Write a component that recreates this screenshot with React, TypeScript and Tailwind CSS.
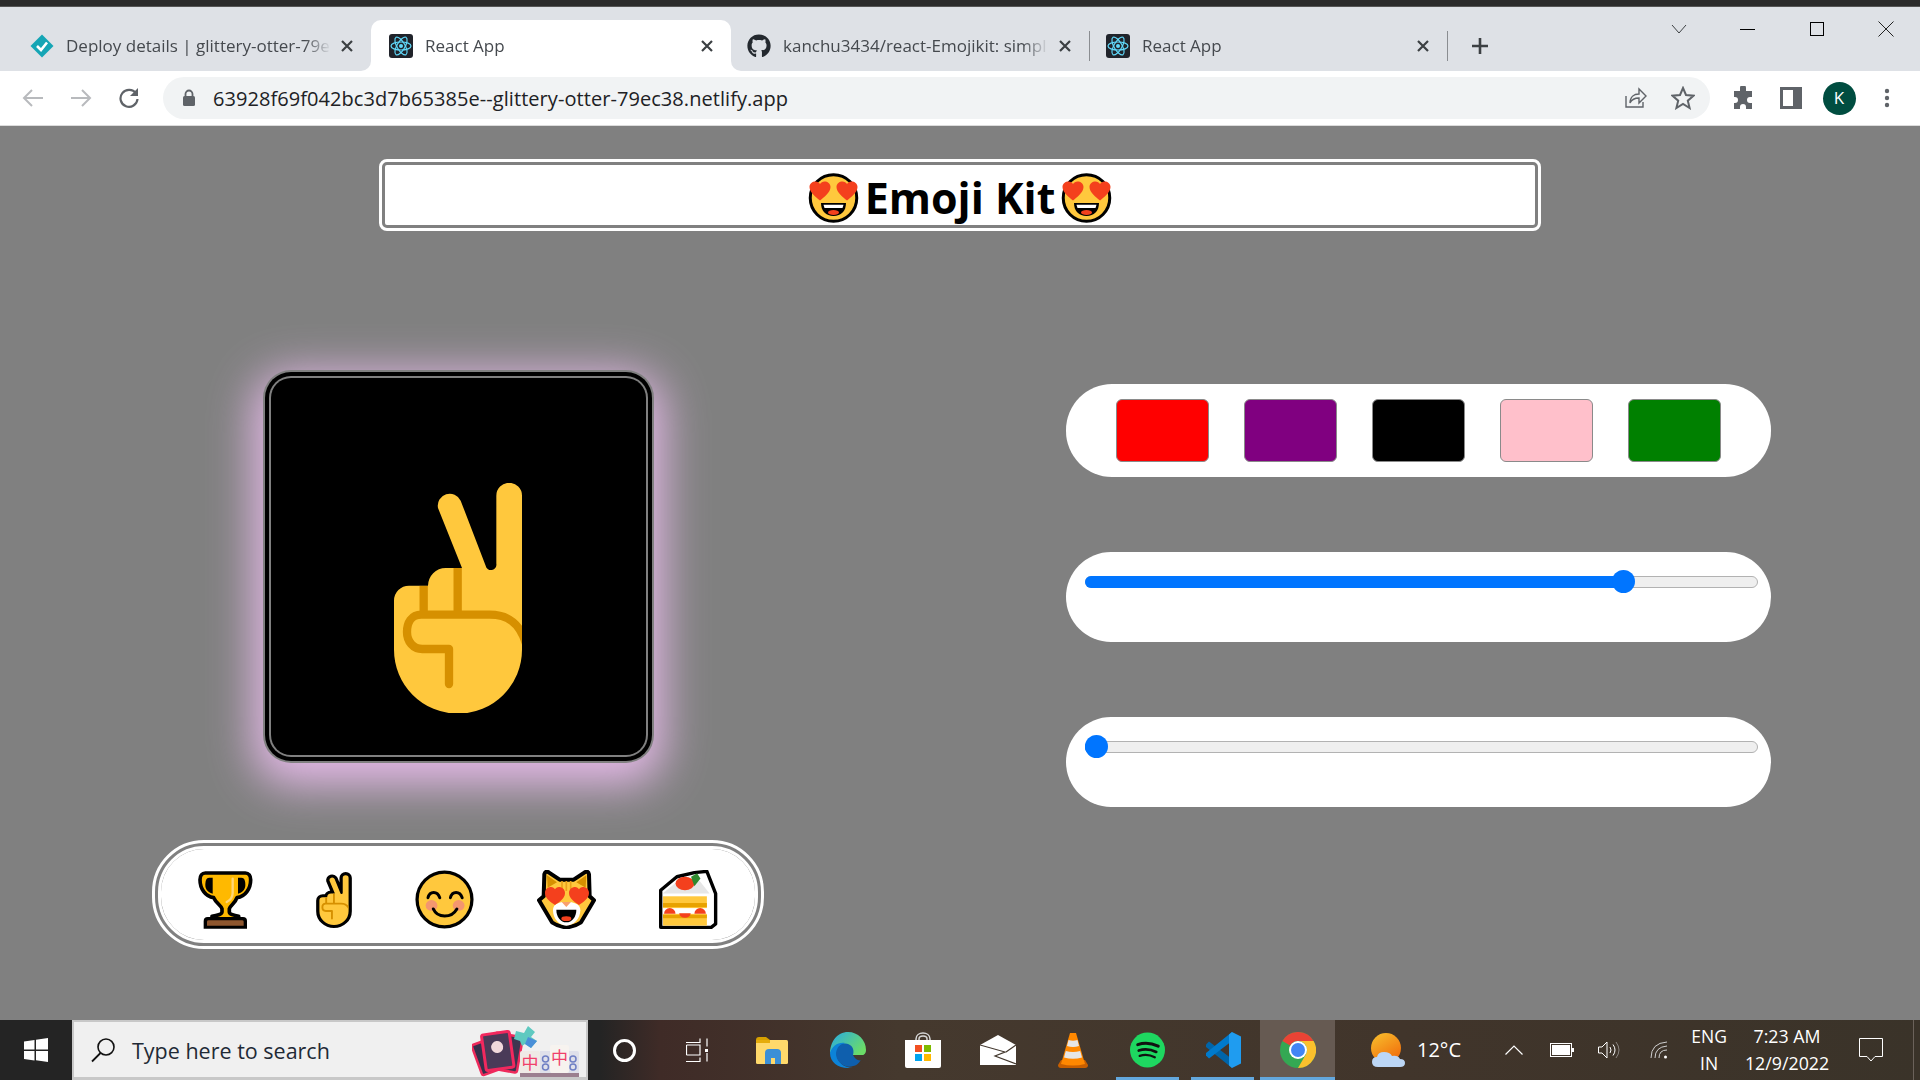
import React from "react";
import { FaGithub } from "react-icons/fa";

const SANS = "font-['Open_Sans',sans-serif]";

function NetlifyIcon() {
  return (
    <svg width="24" height="24" viewBox="0 0 24 24">
      <path d="M12 .5 23.5 12 12 23.5.5 12z" fill="#15a5b5" />
      <path d="m7 12 4 4 6-7.5" fill="none" stroke="#fff" strokeWidth="2.6" />
    </svg>
  );
}

function ReactIcon() {
  return (
    <svg width="24" height="24" viewBox="0 0 24 24">
      <rect width="24" height="24" rx="3" fill="#20232a" />
      <g fill="none" stroke="#61dafb" strokeWidth="1.2">
        <ellipse cx="12" cy="12" rx="10" ry="4" />
        <ellipse cx="12" cy="12" rx="10" ry="4" transform="rotate(60 12 12)" />
        <ellipse cx="12" cy="12" rx="10" ry="4" transform="rotate(120 12 12)" />
      </g>
      <circle cx="12" cy="12" r="2" fill="#61dafb" />
    </svg>
  );
}

function CloseGlyph() {
  return (
    <svg width="14" height="14" viewBox="0 0 14 14">
      <path d="M2 2l10 10M12 2 2 12" stroke="#3c4043" strokeWidth="2.2" />
    </svg>
  );
}

function Tab({
  icon,
  title,
  width,
  pad,
  active,
}: {
  icon: React.ReactNode;
  title: string;
  width: string;
  pad: string;
  active?: boolean;
}) {
  return (
    <div className={`relative flex h-[51px] items-center ${width} ${pad} pr-[16px] rounded-t-[10px] ${active ? "bg-white" : ""}`}>
      {active && (
        <>
          <span className="absolute bottom-0 left-[-10px] h-[10px] w-[10px] bg-white">
            <span className="block h-full w-full rounded-br-[10px] bg-[#dee1e6]" />
          </span>
          <span className="absolute bottom-0 right-[-10px] h-[10px] w-[10px] bg-white">
            <span className="block h-full w-full rounded-bl-[10px] bg-[#dee1e6]" />
          </span>
        </>
      )}
      <span className="flex w-[24px] shrink-0 justify-center">{icon}</span>
      <span
        className={`ml-[12px] min-w-0 flex-1 whitespace-nowrap text-[17px] text-[#45494e] [mask-image:linear-gradient(to_right,black_90%,transparent)] ${SANS}`}
      >
        {title}
      </span>
      <span className="ml-[8px] flex w-[16px] shrink-0 justify-center">
        <CloseGlyph />
      </span>
    </div>
  );
}

function TabStrip() {
  return (
    <div className="flex h-[64px] items-end bg-[#dee1e6] pl-[12px]">
      <Tab icon={<NetlifyIcon />} title="Deploy details | glittery-otter-79e" width="w-[359px]" pad="pl-[18px]" />
      <Tab icon={<ReactIcon />} title="React App" width="w-[360px]" pad="pl-[18px]" active />
      <Tab icon={<FaGithub size={24} color="#24292f" />} title="kanchu3434/react-Emojikit: simpl" width="w-[358px]" pad="pl-[16px]" />
      <div className="mb-[10px] h-[30px] w-px bg-[#8a8d91]" />
      <Tab icon={<ReactIcon />} title="React App" width="w-[357px]" pad="pl-[16px]" />
      <div className="mb-[10px] h-[30px] w-px bg-[#8a8d91]" />
      <svg className="mb-[14px] ml-[21px]" width="22" height="22" viewBox="0 0 22 22">
        <path d="M11 3v16M3 11h16" stroke="#3c4043" strokeWidth="2.6" />
      </svg>
      <div className="ml-auto flex self-start">
        <div className="flex h-[44px] w-[69px] items-center justify-center">
          <svg width="16" height="10" viewBox="0 0 16 10">
            <path d="M1 1l7 8 7-8" fill="none" stroke="#3c4043" strokeWidth="1" />
          </svg>
        </div>
        <div className="flex h-[44px] w-[69px] items-center justify-center">
          <div className="h-px w-[15px] bg-black" />
        </div>
        <div className="flex h-[44px] w-[69px] items-center justify-center">
          <div className="h-[14px] w-[14px] border border-black" />
        </div>
        <div className="flex h-[44px] w-[69px] items-center justify-center">
          <svg width="16" height="16" viewBox="0 0 16 16">
            <path d="M.5.5l15 15M15.5.5l-15 15" stroke="#222" strokeWidth="1" />
          </svg>
        </div>
      </div>
    </div>
  );
}

function ToolSlot({ children }: { children: React.ReactNode }) {
  return <div className="flex w-[48px] items-center justify-center">{children}</div>;
}

function Toolbar() {
  return (
    <div className="flex h-[55px] border-b border-[#dcdcdc] bg-white pl-[9px] pt-[6px]">
      <div className="flex h-[42px]">
        <ToolSlot>
          <svg width="22" height="20" viewBox="0 0 22 20">
            <path d="M21 10H2M10 2l-8 8 8 8" fill="none" stroke="#b8babd" strokeWidth="2" />
          </svg>
        </ToolSlot>
        <ToolSlot>
          <svg width="22" height="20" viewBox="0 0 22 20">
            <path d="M1 10h19M12 2l8 8-8 8" fill="none" stroke="#b8babd" strokeWidth="2" />
          </svg>
        </ToolSlot>
        <ToolSlot>
          <svg width="22" height="22" viewBox="0 0 22 22">
            <path d="M18 6.5A8.5 8.5 0 1 0 19.5 12" fill="none" stroke="#5f6368" strokeWidth="2.2" />
            <path d="M20 1v8h-8z" fill="#5f6368" />
          </svg>
        </ToolSlot>
      </div>
      <div className="ml-[10px] flex h-[42px] w-[1547px] items-center rounded-full bg-[#f1f3f4] pl-[19px] pr-[15px]">
        <svg width="14" height="18" viewBox="0 0 14 18">
          <path d="M3.5 7V5a3.5 3.5 0 0 1 7 0v2" fill="none" stroke="#5f6368" strokeWidth="1.8" />
          <rect x="1" y="7" width="12" height="10" rx="1.5" fill="#5f6368" />
        </svg>
        <span className={`ml-[17px] mt-[1px] flex-1 text-[20px] tracking-[0.06px] text-[#202124] ${SANS}`}>
          63928f69f042bc3d7b65385e--glittery-otter-79ec38.netlify.app
        </span>
        <svg width="24" height="24" viewBox="0 0 24 24">
          <path d="M3 10v11h17v-5" fill="none" stroke="#5f6368" strokeWidth="1.4" />
          <path d="M7 17c0-6 4-9 9-9V3l7 7-7 7v-5c-4 0-7 1-9 5z" fill="none" stroke="#5f6368" strokeWidth="1.4" />
        </svg>
        <svg className="ml-[24px]" width="24" height="24" viewBox="0 0 24 24">
          <path d="m12 2 3 7 7.5.7-5.7 5 1.8 7.3-6.6-4-6.6 4 1.8-7.3-5.7-5L9 9z" fill="none" stroke="#5f6368" strokeWidth="2" />
        </svg>
      </div>
      <div className="ml-[9px] flex h-[42px]">
        <ToolSlot>
          <svg width="24" height="24" viewBox="0 0 24 24">
            <path d="M9 2a3 3 0 0 1 6 0v3h6v6h-2a3 3 0 0 0 0 6h2v6h-6v-2a3 3 0 0 0-6 0v2H3v-6h1a3 3 0 0 0 0-6H3V5h6z" fill="#5f6368" />
          </svg>
        </ToolSlot>
        <ToolSlot>
          <svg width="22" height="22" viewBox="0 0 22 22">
            <rect x="1.5" y="1.5" width="19" height="19" fill="none" stroke="#5f6368" strokeWidth="3" />
            <rect x="13" y="2" width="7" height="18" fill="#5f6368" />
          </svg>
        </ToolSlot>
        <ToolSlot>
          <div className={`flex h-[33px] w-[33px] items-center justify-center rounded-full bg-[#004d40] text-[17px] text-white ${SANS}`}>K</div>
        </ToolSlot>
        <ToolSlot>
          <svg width="6" height="20" viewBox="0 0 6 20">
            <circle cx="3" cy="3" r="2.2" fill="#5f6368" />
            <circle cx="3" cy="10" r="2.2" fill="#5f6368" />
            <circle cx="3" cy="17" r="2.2" fill="#5f6368" />
          </svg>
        </ToolSlot>
      </div>
    </div>
  );
}

const HAND =
  "M770 433a38 38 0 0 1 77 0V895a192 192 0 0 1-384 0V748a45 45 0 0 1 45-45h57a53 53 0 0 1 53-53h49L595 470a36 36 0 0 1 68-22l75 195a16 16 0 0 0 32-6z";

function Hand({ outlined, id, className }: { outlined?: boolean; id: string; className: string }) {
  return (
    <svg className={className} viewBox={outlined ? "418 350 474 780" : "463 395 384 690"} preserveAspectRatio="none">
      <defs>
        <clipPath id={id}>
          <path d={HAND} />
        </clipPath>
      </defs>
      {outlined && <path d={HAND} fill="#000" stroke="#000" strokeWidth="86" strokeLinejoin="round" />}
      <path d={HAND} fill="#ffc83d" />
      <g clipPath={`url(#${id})`} fill="none" stroke="#d69000" strokeWidth="25" strokeLinecap="round" strokeLinejoin="round">
        <path d="M552 703V790M654 650V790" strokeLinecap="butt" />
        <path d="M860 880C840 810 800 790 750 790H545C515 790 502 815 502 842 502 870 520 893 548 893H628V998" />
      </g>
    </svg>
  );
}

function LoveFace() {
  const heart = "M23 55C15 48 2 39 2 28 2 21 8 17 14 17c4 0 7 2 9 5 2-3 5-5 9-5 6 0 12 4 12 11 0 11-13 20-21 27z";
  return (
    <svg className="h-[50px] w-[51px] shrink-0" viewBox="0 0 100 100">
      <circle cx="50" cy="50" r="46.5" fill="#ffc83d" stroke="#000" strokeWidth="6" />
      <path d={heart} fill="#f4401d" />
      <path d={heart} fill="#f4401d" transform="translate(54 0)" />
      <path d="M25 60H75C75 76 65 86 50 86S25 76 25 60z" fill="#000" />
      <path d="M30 63.5H70L68 70H32z" fill="#fff" />
      <ellipse cx="50" cy="79" rx="11" ry="5" fill="#f4401d" />
    </svg>
  );
}

function Trophy() {
  return (
    <svg className="h-[59px] w-[55px]" viewBox="28 30 165 175">
      <path
        d="M50 38H170C180 38 186 46 186 58 186 85 170 108 145 112 140 128 125 135 122 145V155C122 162 135 165 150 168V178H70V168C85 165 100 162 100 155V145C97 135 82 128 75 112 50 108 34 85 34 58 34 46 40 38 50 38z"
        fill="#ffb900"
        stroke="#000"
        strokeWidth="11"
        strokeLinejoin="round"
      />
      <path d="M62 52C50 52 50 68 50 75 50 90 62 98 72 100 72 85 72 65 72 52z" fill="#000" />
      <path d="M158 52C170 52 170 68 170 75 170 90 158 98 148 100 148 85 148 65 148 52z" fill="#000" />
      <path d="M132 55V98C132 112 124 120 114 125" fill="none" stroke="#ffd679" strokeWidth="7" strokeLinecap="round" />
      <path d="M45 205V182Q45 170 57 170H163Q175 170 175 182V205z" fill="#000" />
      <path d="M55 196V184Q55 180 60 180H160Q165 180 165 184V196z" fill="#8e562e" />
    </svg>
  );
}

function Smile() {
  return (
    <svg className="h-[59px] w-[59px]" viewBox="0 0 100 100">
      <circle cx="50" cy="50" r="46.5" fill="#ffc83d" stroke="#000" strokeWidth="5.5" />
      <ellipse cx="28" cy="60" rx="10" ry="9" fill="#f4966f" />
      <ellipse cx="74" cy="60" rx="10" ry="9" fill="#f4966f" />
      <g fill="none" stroke="#000" strokeWidth="5" strokeLinecap="round">
        <path d="M22 47C25 35 38 35 42 47" />
        <path d="M60 47C63 35 76 35 80 47" />
        <path d="M31 66C38 82 62 82 71 66" />
      </g>
    </svg>
  );
}

function Cat() {
  const heart = "M32 62C22 55 2 44 2 26 2 14 12 8 20 8c6 0 10 3 12 7 2-4 6-7 12-7 8 0 18 6 18 18 0 18-20 29-30 36z";
  return (
    <svg className="h-[59px] w-[59px]" viewBox="20 30 177 175">
      <path
        d="M42 42Q45 30 55 36L88 58H130L163 36Q174 30 176 42L178 108 191 120 152 186Q108 215 65 186L26 120 40 108z"
        fill="#ffc83d"
        stroke="#000"
        strokeWidth="12"
        strokeLinejoin="round"
      />
      <path d="M50 45 80 66 52 82zM168 45 138 66 166 82z" fill="#d69000" />
      <path d="M95 62V88M108 62V92M121 62V88" stroke="#e9a21c" strokeWidth="5" />
      <path d="M68 150C68 130 85 125 108 125S150 130 150 150C150 175 130 196 108 196S68 175 68 150z" fill="#fff" />
      <g transform="translate(42 72)"><path d={heart} fill="#f4401d" /></g>
      <g transform="translate(114 72)"><path d={heart} fill="#f4401d" /></g>
      <path d="M94 125H122L108 140z" fill="#f9a06e" />
      <path d="M78 148H138C138 170 125 186 108 186S78 170 78 148z" fill="#000" />
      <ellipse cx="108" cy="175" rx="15" ry="7" fill="#f4401d" />
    </svg>
  );
}

function Cake() {
  return (
    <svg className="h-[59px] w-[59px]" viewBox="385 30 175 175">
      <path d="M390 90 438 50 490 38 527 34 553 100V190L540 200H390z" fill="#fff" stroke="#000" strokeWidth="10" strokeLinejoin="round" />
      <path d="M396 100 442 62H505L535 100z" fill="#e6e6e6" />
      <rect x="397" y="108" width="130" height="35" fill="#ffc83d" />
      <rect x="397" y="128" width="130" height="12" fill="#e8a200" />
      <rect x="397" y="160" width="130" height="35" fill="#ffc83d" />
      <rect x="397" y="163" width="130" height="10" fill="#e8a200" />
      <path d="M400 160a17 17 0 0 1 34 0zM445 158a17 14 0 0 0 34 0zM490 160a17 17 0 0 1 34 0z" fill="#f4401d" />
      <ellipse cx="462" cy="70" rx="28" ry="20" fill="#f4401d" />
      <path d="M480 50 498 40 508 55 490 78z" fill="#2f8a2f" />
    </svg>
  );
}

function Swatch({ color }: { color: string }) {
  return <div className={`h-[63px] w-[93px] rounded-[6px] border border-[#8a8a8a] ${color}`} />;
}

function Slider({ fill, thumb }: { fill: string; thumb: string }) {
  return (
    <div className="h-[90px] w-[705px] rounded-[46px] bg-white pl-[19px] pr-[13px] pt-[24px]">
      <div className="relative h-[12px] rounded-full border border-[#b2b2b2] bg-[#efefef]">
        <div className={`absolute -inset-y-px -left-px rounded-full bg-[#0075ff] ${fill}`} />
        <div className={`absolute top-[-7px] h-[23px] w-[23px] rounded-full bg-[#0075ff] ${thumb}`} />
      </div>
    </div>
  );
}

function Page() {
  return (
    <div className="flex min-h-0 flex-1 flex-col bg-[#808080] pl-[152px] pt-[33px]">
      <div className="ml-[227px] flex h-[72px] w-[1162px] items-center justify-center rounded-[8px] border-[9px] border-double border-white bg-white bg-clip-padding pt-[5px]">
        <div className="flex items-center">
          <LoveFace />
          <h1 className={`mx-[6px] text-[43px] font-bold leading-[50px] text-black ${SANS}`}>Emoji Kit</h1>
          <LoveFace />
        </div>
      </div>
      <div className="mt-[139px] flex items-start">
        <div className="flex w-[612px] flex-col items-center">
          <div className="flex h-[392px] w-[390px] items-center justify-center">
            <div className="flex h-[377px] w-[375px] shrink-0 justify-center rounded-[20px] bg-black pt-[105px] shadow-[0_0_0_2px_#808080,0_0_0_6px_#000,0_0_0_8px_#808080,0_12px_44px_18px_#e3b8e6]">
              <Hand id="hand-big" className="h-[230px] w-[128px]" />
            </div>
          </div>
          <div className="mt-[78px] flex h-[109px] w-[612px] items-center justify-center gap-[63px] rounded-[52px] border-[9px] border-double border-white bg-white bg-clip-padding pt-[10px]">
            <Trophy />
            <Hand id="hand-small" outlined className="h-[56px] w-[36px]" />
            <Smile />
            <Cat />
            <Cake />
          </div>
        </div>
        <div className="ml-[302px] mt-[14px] flex w-[705px] flex-col gap-[75px]">
          <div className="flex h-[93px] w-[705px] items-center gap-[35px] rounded-[46px] bg-white pl-[50px]">
            <Swatch color="bg-[#ff0000]" />
            <Swatch color="bg-[#800080]" />
            <Swatch color="bg-[#000000]" />
            <Swatch color="bg-[#ffc0cb]" />
            <Swatch color="bg-[#008000]" />
          </div>
          <Slider fill="w-[538px]" thumb="left-[526px]" />
          <Slider fill="w-[10px]" thumb="left-[-1px]" />
        </div>
      </div>
    </div>
  );
}

function SearchArt() {
  return (
    <svg width="108" height="54" viewBox="0 0 108 54">
      <g transform="rotate(-20 20 32)">
        <rect x="4" y="16" width="28" height="32" rx="2" fill="#35304c" stroke="#ee2a5b" strokeWidth="2.5" />
      </g>
      <g transform="rotate(10 36 30)">
        <rect x="20" y="12" width="28" height="36" rx="2" fill="#3d3550" stroke="#ee2a5b" strokeWidth="2.5" />
      </g>
      <g transform="rotate(-8 26 30)">
        <rect x="12" y="10" width="28" height="36" rx="2" fill="#4a3a58" stroke="#f2285e" strokeWidth="3" />
        <circle cx="26" cy="24" r="6" fill="#f2d9dc" />
      </g>
      <path d="M44 8 52 10 56 3 63 9 59 14 65 18 59 25 53 21 50 23 48 18 42 16z" fill="#5fc9c0" />
      <path d="M56 14 65 18 59 25 53 21z" fill="#4a8fd8" />
      <rect x="48" y="28" width="20" height="26" rx="2" fill="#efeae6" />
      <rect x="68" y="28" width="11" height="26" fill="#dfe0ea" />
      <rect x="95" y="28" width="12" height="26" rx="2" fill="#dfe0ea" />
      <rect x="78" y="22" width="19" height="28" rx="2" fill="#f7f3ef" />
      <rect x="48" y="50" width="59" height="4" fill="#9b7f8f" />
      <circle cx="73.500" cy="36" r="3" fill="none" stroke="#6f7fc4" strokeWidth="1.500" />
      <circle cx="73.500" cy="44" r="3" fill="none" stroke="#6f7fc4" strokeWidth="1.500" />
      <circle cx="101" cy="36" r="3" fill="none" stroke="#6f7fc4" strokeWidth="1.500" />
      <circle cx="101" cy="44" r="3" fill="none" stroke="#6f7fc4" strokeWidth="1.500" />
      <text x="58" y="46" textAnchor="middle" fontSize="17" fill="#f0406a" fontFamily="'Noto Sans CJK SC', sans-serif">中</text>
      <text x="87.500" y="41" textAnchor="middle" fontSize="17" fill="#f0406a" fontFamily="'Noto Sans CJK SC', sans-serif">中</text>
    </svg>
  );
}

function Slot({ width, active, under, children }: { width: string; active?: boolean; under?: boolean; children: React.ReactNode }) {
  return (
    <div className={`relative flex h-full shrink-0 items-center justify-center ${width} ${active ? "bg-[#665a52]" : ""}`}>
      {children}
      {under && <div className="absolute inset-x-[6px] bottom-0 h-[3px] bg-[#63a8de]" />}
      {active && <div className="absolute inset-x-0 bottom-0 h-[3px] bg-[#63a8de]" />}
    </div>
  );
}

function Edge() {
  return (
    <svg width="36" height="36" viewBox="0 0 36 36">
      <defs>
        <linearGradient id="edge-top" x1="0" y1="0" x2="1" y2="0.6">
          <stop offset="0" stopColor="#27a9e6" />
          <stop offset="1" stopColor="#6bdc68" />
        </linearGradient>
      </defs>
      <path d="M18 0C28 0 36 8 36 18c0 4-3 6-7 6h-7c2-6-1-12-7-12C8 12 2 16 0 22 0 10 7 0 18 0z" fill="url(#edge-top)" />
      <path d="M0 21C2 14 8 10 15 11c-6 3-9 8-8 13 1 7 8 12 16 12h-5C8 36 0 30 0 21z" fill="#0c83d8" />
      <path d="M15 11.5c6 0 10 5 8 11.500h10c-1 4-3 7-6 9.500-5 3-12 3-16-1-5-4-6-10-4-14 1-3 4-6 8-6z" fill="#0f5fad" />
      <path d="M23 23h13c-.5 2-2 4-3.500 5.500-3 .5-7-.5-9.500-5.500z" fill="#43382e" />
    </svg>
  );
}

function Chrome() {
  return (
    <svg width="36" height="36" viewBox="0 0 36 36">
      <circle cx="18" cy="18" r="18" fill="#34a853" />
      <path d="M33.600 9A18 18 0 0 1 18 36L25.800 22.500A9 9 0 0 0 18 9z" fill="#fbc02d" />
      <path d="M2.400 9A18 18 0 0 1 33.600 9H18A9 9 0 0 0 10.200 13.500z" fill="#ea4335" />
      <circle cx="18" cy="18" r="9" fill="#fff" />
      <circle cx="18" cy="18" r="7" fill="#4285f4" />
    </svg>
  );
}

function Taskbar() {
  const text = `text-white ${SANS}`;
  return (
    <div className="flex h-[60px] shrink-0 bg-[linear-gradient(to_right,#242424_0,#242424_600px,#3f2b27_660px,#45392e_900px,#41352b_1400px,#3a3329_1920px)]">
      <div className="flex h-full w-[72px] items-center justify-center">
        <svg width="24" height="24" viewBox="0 0 24 24">
          <path d="M0 3.500 10.500 2v9.500H0zM12 1.800 24 0v11.500H12zM0 13h10.500v9.500L0 21zM12 13h12v11l-12-1.700z" fill="#fff" />
        </svg>
      </div>
      <div className="flex h-full w-[516px] items-center border-2 border-b-[3px] border-[#c8c8c8] bg-[#f0f0f0] pl-[16px]">
        <svg width="26" height="26" viewBox="0 0 26 26">
          <circle cx="16" cy="10" r="8" fill="none" stroke="#111" strokeWidth="1.6" />
          <path d="M10.500 16 2 24.500" stroke="#111" strokeWidth="1.800" />
        </svg>
        <span className={`ml-[16px] mt-[3px] text-[21.5px] text-[#1f2a36] ${SANS}`}>Type here to search</span>
        <div className="ml-auto flex items-center pr-[6px]">
          <SearchArt />
        </div>
      </div>
      <Slot width="w-[72px]">
        <div className="h-[23px] w-[23px] rounded-full border-[3px] border-white" />
      </Slot>
      <Slot width="w-[74px]">
        <svg width="22" height="24" viewBox="0 0 22 24">
          <path d="M0 4.500h14V.5M0 .5v0M0 23.500h14v-4M0 23.500M.5 7v10M.5 7H14v10H.5M21 .5v8M21 15v8.500" fill="none" stroke="#fff" strokeWidth="1.200" />
          <rect x="19" y="11" width="3" height="3" fill="#fff" />
        </svg>
      </Slot>
      <Slot width="w-[76px]">
        <svg width="32" height="27" viewBox="0 0 32 27">
          <path d="M0 3q0-3 3-3h7l4 3h-14z" fill="#d6a000" />
          <rect y="3" width="32" height="24" rx="1.500" fill="#ffd96b" />
          <rect y="3" width="14" height="3" fill="#e5ac0c" />
          <path d="M9 27V16q0-4 4-4h8q4 0 4 4v11h-6v-6h-4v6z" fill="#3b8fd6" />
        </svg>
      </Slot>
      <Slot width="w-[75px]">
        <Edge />
      </Slot>
      <Slot width="w-[75px]">
        <svg width="36" height="36" viewBox="0 0 36 36">
          <path d="M11 10V7c0-8 14-8 14 0v3M14 10V7c0-4 8-4 8 0v3" fill="none" stroke="#d8d8d8" strokeWidth="1.500" />
          <path d="M0 8h36v26q0 2-2 2H2q-2 0-2-2z" fill="#fff" />
          <rect x="10" y="13" width="7" height="7" fill="#f25022" />
          <rect x="19" y="13" width="7" height="7" fill="#7fba00" />
          <rect x="10" y="22" width="7" height="7" fill="#00a4ef" />
          <rect x="19" y="22" width="7" height="7" fill="#ffb900" />
        </svg>
      </Slot>
      <Slot width="w-[76px]">
        <svg width="36" height="30" viewBox="0 0 36 30">
          <path d="M0 10 18 0l18 10v20H0z" fill="#fff" />
          <path d="M0 10 25 17 15 21l21 8M36 10 26 17" fill="none" stroke="#43382e" strokeWidth="1.200" />
        </svg>
      </Slot>
      <Slot width="w-[74px]">
        <svg width="30" height="35" viewBox="0 0 30 35">
          <path d="M3 27 0 32q0 3 3 3h24q3 0 3-3l-3-5z" fill="#c85f00" />
          <path d="M12 0h6l9 31q-12 3-24 0z" fill="#ff8800" />
          <path d="M10.500 7q4.500 1.500 9 0l1.500 6q-6 2-12 0zM7.800 18q7 2 14.400 0l1.800 6.500q-9 2.500-18 0z" fill="#e6e6e6" />
        </svg>
      </Slot>
      <Slot width="w-[75px]" under>
        <svg width="35" height="36" viewBox="0 0 36 36">
          <circle cx="18" cy="18" r="18" fill="#1ed760" />
          <g fill="none" stroke="#111" strokeLinecap="round">
            <path d="M8 12.500Q18 9 29 14" strokeWidth="3.200" />
            <path d="M9 18.500Q18 15.500 27 20" strokeWidth="2.800" />
            <path d="M10 24Q18 21.500 25.500 25.500" strokeWidth="2.400" />
          </g>
        </svg>
      </Slot>
      <Slot width="w-[75px]" under>
        <svg width="36" height="36" viewBox="0 0 36 36">
          <path d="M1 12.500 4 9.500 27 27V36L1 15z" fill="#0065a9" />
          <path d="M1 23.500 4 26.500 27 9V0L1 21z" fill="#007acc" />
          <path d="M27 0 36 4.500V31.500L27 36 24 33.500V2.500z" fill="#1f9cf0" />
        </svg>
      </Slot>
      <Slot width="w-[75px]" active>
        <Chrome />
      </Slot>
      <div className="ml-[36px] flex h-full flex-1 items-center">
        <svg width="35" height="34" viewBox="0 0 35 34">
          <defs>
            <linearGradient id="sun" x1="0" y1="0" x2="0.6" y2="1">
              <stop offset="0" stopColor="#f8c22e" />
              <stop offset="1" stopColor="#f16f0c" />
            </linearGradient>
          </defs>
          <circle cx="15" cy="15" r="15" fill="url(#sun)" />
          <path d="M7 34q-6 0-6-5t5-5q1-5 7-5t8 4q6-1 8 3 5 0 5 4t-5 4z" fill="#bcd6f5" />
        </svg>
        <span className={`ml-[11px] text-[20px] ${text}`}>12°C</span>
        <svg className="ml-[44px]" width="18" height="10" viewBox="0 0 18 10">
          <path d="M.5 9.500 9 1l8.500 8.500" fill="none" stroke="#fff" strokeWidth="1.200" />
        </svg>
        <svg className="ml-[27px]" width="24" height="14" viewBox="0 0 24 14">
          <rect x=".5" y=".5" width="21" height="13" fill="none" stroke="#fff" />
          <rect x="2" y="2" width="18" height="10" fill="#fff" />
          <rect x="22" y="5" width="2" height="4" fill="#fff" />
        </svg>
        <svg className="ml-[24px]" width="22" height="18" viewBox="0 0 22 18">
          <path d="M.5 6v6h3.500l5 5V1L4 6z" fill="none" stroke="#fff" />
          <path d="M12 6q2 3 0 6" fill="none" stroke="#fff" />
          <path d="M15 3.500q4 5.500 0 11" fill="none" stroke="#fff" />
          <path d="M18 1q6 8 0 16" fill="none" stroke="#8a8480" />
        </svg>
        <svg className="ml-[30px]" width="18" height="18" viewBox="0 0 18 18">
          <path d="M1 17Q1 2 17 1M5 17Q5 6 17 5M9 17q0-8 8-8" fill="none" stroke="#cfcfcf" />
          <circle cx="15.500" cy="16" r="1.500" fill="#fff" />
        </svg>
        <div className={`ml-[19px] flex w-[44px] flex-col items-center text-[17.5px] leading-[27px] ${text}`}>
          <span>ENG</span>
          <span>IN</span>
        </div>
        <div className={`ml-[4px] flex w-[104px] flex-col items-center text-[17.8px] leading-[27px] ${text}`}>
          <span>7:23 AM</span>
          <span>12/9/2022</span>
        </div>
        <svg className="ml-[20px]" width="24" height="24" viewBox="0 0 24 24">
          <path d="M.5.5h23v18H16l-4 4.500-4-4.500H.5z" fill="none" stroke="#fff" />
        </svg>
        <div className="ml-auto h-full w-[7px] border-l border-[#6b625a]" />
      </div>
    </div>
  );
}

export default function App() {
  return (
    <div className="flex h-[1080px] w-[1920px] flex-col overflow-hidden bg-[#808080]">
      <div className="h-[7px] border-b border-[#555] bg-[#2b2b2b]" />
      <TabStrip />
      <Toolbar />
      <Page />
      <Taskbar />
    </div>
  );
}
